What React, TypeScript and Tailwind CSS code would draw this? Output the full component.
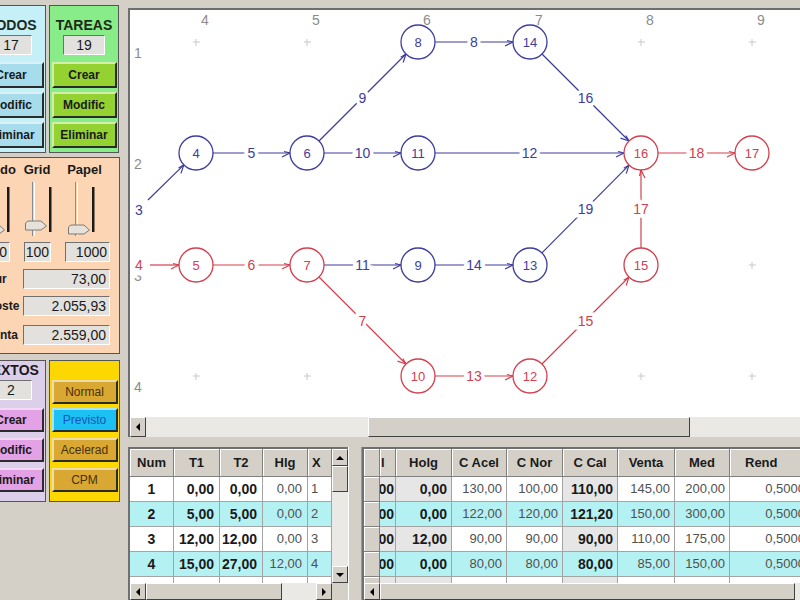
import React from 'react';

type Pt = [number, number];

const BLUE = '#3d3d9e';
const RED = '#d3404f';
const R = 17;

const nodes: Record<string, { p: Pt; c: string }> = {
  '4': { p: [196, 153], c: BLUE },
  '6': { p: [307, 153], c: BLUE },
  '8': { p: [418, 42], c: BLUE },
  '14': { p: [530, 42], c: BLUE },
  '11': { p: [418, 153], c: BLUE },
  '16': { p: [641, 153], c: RED },
  '17': { p: [752, 153], c: RED },
  '5': { p: [196, 265], c: RED },
  '7': { p: [307, 265], c: RED },
  '9': { p: [418, 265], c: BLUE },
  '13': { p: [530, 265], c: BLUE },
  '15': { p: [641, 265], c: RED },
  '10': { p: [418, 376], c: RED },
  '12': { p: [530, 376], c: RED },
};

interface EdgeDef {
  l: string;
  from: string | Pt;
  to: string;
  c: string;
  lp?: Pt;
}

const edges: EdgeDef[] = [
  { l: '3', from: [148, 200], to: '4', c: BLUE, lp: [139, 210] },
  { l: '4', from: [150, 265], to: '5', c: RED, lp: [139, 265] },
  { l: '5', from: '4', to: '6', c: BLUE },
  { l: '6', from: '5', to: '7', c: RED },
  { l: '9', from: '6', to: '8', c: BLUE },
  { l: '10', from: '6', to: '11', c: BLUE },
  { l: '8', from: '8', to: '14', c: BLUE },
  { l: '11', from: '7', to: '9', c: BLUE },
  { l: '7', from: '7', to: '10', c: RED },
  { l: '12', from: '11', to: '16', c: BLUE },
  { l: '16', from: '14', to: '16', c: BLUE },
  { l: '14', from: '9', to: '13', c: BLUE },
  { l: '19', from: '13', to: '16', c: BLUE },
  { l: '13', from: '10', to: '12', c: RED },
  { l: '15', from: '12', to: '15', c: RED },
  { l: '17', from: '15', to: '16', c: RED },
  { l: '18', from: '16', to: '17', c: RED },
];

function edgeGeom(e: EdgeDef) {
  const a = typeof e.from === 'string' ? nodes[e.from].p : e.from;
  const ra = typeof e.from === 'string' ? R : 0;
  const b = nodes[e.to].p;
  const dx = b[0] - a[0];
  const dy = b[1] - a[1];
  const len = Math.hypot(dx, dy);
  const ux = dx / len;
  const uy = dy / len;
  const nx = -uy;
  const ny = ux;
  const x1 = a[0] + ux * ra;
  const y1 = a[1] + uy * ra;
  const x2 = b[0] - ux * R;
  const y2 = b[1] - uy * R;
  const barb = `${x2 - ux * 8 + nx * 4},${y2 - uy * 8 + ny * 4} ${x2},${y2} ${x2 - ux * 6 - nx * 1.5},${y2 - uy * 6 - ny * 1.5}`;
  const lp: Pt = e.lp ?? [(a[0] + b[0]) / 2, (a[1] + b[1]) / 2];
  return { x1, y1, x2, y2, barb, lp };
}

function NetworkCanvas() {
  const cols = [196, 307, 418, 530, 641, 752];
  const rows = [42, 153, 265, 376];
  const crosses: Pt[] = [
    [196, 42], [307, 42], [641, 42], [752, 42], [752, 265],
    [196, 376], [307, 376], [641, 376], [752, 376],
  ];
  return (
    <div className="h-[407px] bg-white overflow-hidden">
      <svg width="670" height="407" viewBox="130 10 670 407" fontFamily="'Liberation Sans', Arial, sans-serif">
        {crosses.map(([x, y], i) => (
          <g key={i} stroke="#c8c8c8" strokeWidth="1">
            <line x1={x - 3} y1={y} x2={x + 4} y2={y} />
            <line x1={x} y1={y - 3} x2={x} y2={y + 4} />
          </g>
        ))}
        {cols.map((x, i) => (
          <text key={i} x={x + 9} y={20} fontSize="14" fill="#8c8c8c" textAnchor="middle" dominantBaseline="central">
            {i + 4}
          </text>
        ))}
        {rows.map((y, i) => (
          <text key={i} x={138} y={y + 11} fontSize="14" fill="#8c8c8c" textAnchor="middle" dominantBaseline="central">
            {i + 1}
          </text>
        ))}
        {edges.map((e) => {
          const g = edgeGeom(e);
          return (
            <g key={e.l} stroke={e.c} strokeWidth="1.2" fill="none">
              <line x1={g.x1} y1={g.y1} x2={g.x2} y2={g.y2} />
              <polyline points={g.barb} />
            </g>
          );
        })}
        {edges.map((e) => {
          const g = edgeGeom(e);
          return (
            <text
              key={e.l}
              x={g.lp[0]}
              y={g.lp[1]}
              fontSize="14"
              fill={e.c}
              stroke="#ffffff"
              strokeWidth={e.l === '4' ? 11 : 7}
              paintOrder="stroke"
              textAnchor="middle"
              dominantBaseline="central"
            >
              {e.l}
            </text>
          );
        })}
        {Object.entries(nodes).map(([k, n]) => (
          <g key={k}>
            <circle cx={n.p[0]} cy={n.p[1]} r={R} fill="#ffffff" stroke={n.c} strokeWidth="1.3" />
            <text x={n.p[0]} y={n.p[1]} fontSize="13" fill={n.c} textAnchor="middle" dominantBaseline="central">
              {k}
            </text>
          </g>
        ))}
      </svg>
    </div>
  );
}

const Arrow = ({ dir, className }: { dir: 'l' | 'r' | 'u' | 'd'; className: string }) => {
  const horiz = dir === 'l' || dir === 'r';
  const pts = { l: '4,0 0,4 4,8', r: '0,0 4,4 0,8', u: '0,4 4,0 8,4', d: '0,0 4,4 8,0' }[dir];
  return (
    <div className={`flex items-center justify-center shrink-0 bg-[#d4d0c8] border border-t-white border-l-white border-r-[#404040] border-b-[#404040] ${className}`}>
      <svg width={horiz ? 4 : 8} height={horiz ? 8 : 4} viewBox={horiz ? '0 0 4 8' : '0 0 8 4'}>
        <polygon points={pts} fill="#000" />
      </svg>
    </div>
  );
};

const thumb = 'bg-[#d4d0c8] border border-t-white border-l-white border-r-[#404040] border-b-[#404040]';
const track = 'bg-[#ebe9e5]';

function CanvasScrollbar() {
  return (
    <div className="h-[20px] flex bg-[#d4d0c8]">
      <Arrow dir="l" className="w-[16px] h-full" />
      <div className={`w-[222px] ${track}`} />
      <div className={`w-[322px] ${thumb}`} />
      <div className={`flex-1 ${track}`} />
    </div>
  );
}

function Btn({ children, className }: { children: React.ReactNode; className: string }) {
  return (
    <div className={`flex items-center justify-center shrink-0 border-2 border-t-white/60 border-l-white/60 border-r-[#2b2b2b] border-b-[#2b2b2b] ${className}`}>
      {children}
    </div>
  );
}

const sunken = 'border border-t-[#707070] border-l-[#707070] border-b-white border-r-white bg-[#e3e1dd]';

function RecordPanel({ title, value, panel, btn }: { title: string; value: string; panel: string; btn: string }) {
  return (
    <div className={`w-[70px] h-[148px] border border-[#555555] flex flex-col items-center pt-[9px] ${panel}`}>
      <div className="h-[20px] leading-[20px] text-[14px] font-bold text-[#1c2a1c]">{title}</div>
      <div className={`w-[42px] h-[20px] flex items-center justify-center text-[14px] ${sunken}`}>{value}</div>
      <div className="mt-[7px] flex flex-col gap-[4px] text-[12px] font-bold text-[#1a1a1a]">
        <Btn className={`w-[65px] h-[26px] ${btn}`}>Crear</Btn>
        <Btn className={`w-[65px] h-[26px] ${btn}`}>Modific</Btn>
        <Btn className={`w-[65px] h-[26px] ${btn}`}>Eliminar</Btn>
      </div>
    </div>
  );
}

function Slider({ t }: { t: number }) {
  return (
    <svg width="28" height="58" viewBox="0 0 28 58" className="shrink-0">
      <line x1="7.5" y1="2" x2="7.5" y2="56" stroke="#8a8a8a" />
      <line x1="9.5" y1="2" x2="9.5" y2="56" stroke="#ffffff" />
      <rect x="24" y="7" width="2.5" height="45" fill="#1a1a1a" />
      <polygon points={`0.5,${t + 2} 3,${t} 16,${t} 21.5,${t + 5} 16,${t + 9} 0.5,${t + 9}`} fill="#e6e2da" stroke="#7a7a7a" />
    </svg>
  );
}

function ValueRow({ label, value, className }: { label: string; value: string; className: string }) {
  return (
    <div className={`flex items-center h-[20px] ${className}`}>
      <div className="w-[47px] pl-[10px] text-[12px] font-bold whitespace-nowrap">{label}</div>
      <div className={`w-[87px] h-[20px] flex items-center justify-end pr-[3px] text-[14px] ${sunken}`}>{value}</div>
    </div>
  );
}

function ParamsPanel() {
  return (
    <div className="mt-[4px] w-[145px] h-[197px] border border-[#555555] bg-[#fcd6b4] flex flex-col pt-[4px]">
      <div className="h-[16px] flex text-[13px] font-bold leading-[16px]">
        <span className="w-[45px] text-center">Modo</span>
        <span className="w-[32px] text-center">Grid</span>
        <span className="w-[63px] text-center">Papel</span>
      </div>
      <div className="mt-[2px] h-[58px] flex">
        <div className="ml-[7px]"><Slider t={45} /></div>
        <div className="ml-[14px]"><Slider t={41} /></div>
        <div className="ml-[15px]"><Slider t={45} /></div>
      </div>
      <div className="mt-[4px] h-[20px] flex text-[14px]">
        <div className={`ml-[6px] w-[28px] flex items-center justify-end pr-[2px] ${sunken}`}>0</div>
        <div className={`ml-[14px] w-[27px] flex items-center justify-end pr-[1px] ${sunken}`}>100</div>
        <div className={`ml-[14px] w-[45px] flex items-center justify-end pr-[2px] ${sunken}`}>1000</div>
      </div>
      <ValueRow label="Dur" value="73,00" className="mt-[7px]" />
      <ValueRow label="Coste" value="2.055,93" className="mt-[7px]" />
      <ValueRow label="Venta" value="2.559,00" className="mt-[9px]" />
    </div>
  );
}

function TextPanel() {
  const btn = 'w-[65px] h-[24px] bg-[#e4a2e6]';
  return (
    <div className="w-[70px] h-[142px] border border-[#555555] bg-[#dccfea] flex flex-col items-center">
      <div className="h-[19px] leading-[19px] text-[14px] font-bold">TEXTOS</div>
      <div className={`w-[42px] h-[20px] flex items-center justify-center text-[14px] ${sunken}`}>2</div>
      <div className="mt-[8px] flex flex-col gap-[6px] text-[12px] font-bold">
        <Btn className={btn}>Crear</Btn>
        <Btn className={btn}>Modific</Btn>
        <Btn className={btn}>Eliminar</Btn>
      </div>
    </div>
  );
}

function ModePanel() {
  const btn = 'w-[66px] h-[24px]';
  return (
    <div className="w-[71px] h-[142px] border border-[#555555] bg-[#fcd800] flex flex-col items-center pt-[19px] text-[12px] text-[#4a3008]">
      <Btn className={`${btn} bg-[#d9a832]`}>Normal</Btn>
      <Btn className={`${btn} mt-[4px] bg-[#1cc0f2] text-[#1058b8]`}>Previsto</Btn>
      <Btn className={`${btn} mt-[6px] bg-[#d9a832]`}>Acelerad</Btn>
      <Btn className={`${btn} mt-[6px] bg-[#d9a832]`}>CPM</Btn>
    </div>
  );
}

function LeftColumn() {
  return (
    <div className="w-[120px] shrink-0 overflow-hidden">
      <div className="-ml-[25px] w-[145px] pt-[5px] flex flex-col">
        <div className="flex gap-[3px] pl-[1px]">
          <RecordPanel title="NODOS" value="17" panel="bg-[#c6f0f8]" btn="bg-[#a6dcec]" />
          <RecordPanel title="TAREAS" value="19" panel="bg-[#88ec88]" btn="bg-[#94d232]" />
        </div>
        <ParamsPanel />
        <div className="flex gap-[3px] pl-[1px] mt-[6px]">
          <TextPanel />
          <ModePanel />
        </div>
      </div>
    </div>
  );
}

interface Col {
  w: string;
  h: string;
  cls?: string;
  hcls?: string;
  gray?: boolean;
  fixed?: boolean;
}

const BOLD = 'font-bold text-[14px] text-[#1a1a1a]';
const NORM = 'text-[13px] text-[#505050]';
const CYAN = 'bg-[#b4f1f3]';

function GridTable({ cols, rows }: { cols: Col[]; rows: string[][] }) {
  return (
    <div className="flex flex-col">
      <div className="flex h-[28px] shrink-0">
        {cols.map((c, i) => (
          <div
            key={i}
            className={`${c.w} shrink-0 h-full flex items-center overflow-hidden whitespace-nowrap bg-[#d4d0c8] border-r border-b border-[#808080] shadow-[inset_1px_1px_0_#ffffff] text-[13px] font-bold text-[#1a1a1a] ${c.hcls ?? 'justify-center'}`}
          >
            {c.h}
          </div>
        ))}
      </div>
      {rows.map((r, ri) => (
        <div key={ri} className="flex h-[25px] shrink-0">
          {cols.map((c, ci) => {
            const bg = c.fixed
              ? 'bg-[#d4d0c8] shadow-[inset_1px_1px_0_#ffffff] border-[#808080]'
              : ri % 2 === 1
                ? `${CYAN} border-[#a4a4a4]`
                : c.gray
                  ? 'bg-[#e6e6e6] border-[#a4a4a4]'
                  : 'bg-white border-[#a4a4a4]';
            return (
              <div
                key={ci}
                className={`${c.w} shrink-0 h-full flex items-center overflow-hidden whitespace-nowrap border-r border-b ${bg} ${c.cls ?? ''}`}
              >
                {r[ci]}
              </div>
            );
          })}
        </div>
      ))}
    </div>
  );
}

const leftCols: Col[] = [
  { w: 'w-[44px]', h: 'Num', cls: `justify-center ${BOLD}` },
  { w: 'w-[46px]', h: 'T1', cls: `justify-end pr-[5px] ${BOLD}` },
  { w: 'w-[43px]', h: 'T2', cls: `justify-end pr-[5px] ${BOLD}` },
  { w: 'w-[45px]', h: 'Hlg', cls: `justify-end pr-[5px] ${NORM}` },
  { w: 'w-[24px]', h: 'X', cls: `justify-start pl-[3px] ${NORM}`, hcls: 'justify-start pl-[4px]' },
];

const leftRows = [
  ['1', '0,00', '0,00', '0,00', '1'],
  ['2', '5,00', '5,00', '0,00', '2'],
  ['3', '12,00', '12,00', '0,00', '3'],
  ['4', '15,00', '27,00', '12,00', '4'],
  ['5', '20,00', '30,00', '0,00', '5'],
];

const rightCols: Col[] = [
  { w: 'w-[16px]', h: '', fixed: true },
  { w: 'w-[16px]', h: 'l', cls: `justify-end pr-[1px] ${BOLD}`, hcls: 'justify-start pl-[1px]', gray: true },
  { w: 'w-[56px]', h: 'Holg', cls: `justify-end pr-[4px] ${BOLD}`, gray: true },
  { w: 'w-[55px]', h: 'C Acel', cls: `justify-end pr-[4px] ${NORM}` },
  { w: 'w-[56px]', h: 'C Nor', cls: `justify-end pr-[4px] ${NORM}` },
  { w: 'w-[55px]', h: 'C Cal', cls: `justify-end pr-[4px] ${BOLD}`, gray: true },
  { w: 'w-[57px]', h: 'Venta', cls: `justify-end pr-[4px] ${NORM}` },
  { w: 'w-[55px]', h: 'Med', cls: `justify-end pr-[4px] ${NORM}` },
  { w: 'w-[80px]', h: 'Rend', cls: `justify-end pr-[4px] ${NORM}`, hcls: 'justify-start pl-[15px]' },
];

const rightRows = [
  ['', '0,00', '0,00', '130,00', '100,00', '110,00', '145,00', '200,00', '0,5000'],
  ['', '0,00', '0,00', '122,00', '120,00', '121,20', '150,00', '300,00', '0,5000'],
  ['', '0,00', '12,00', '90,00', '90,00', '90,00', '110,00', '175,00', '0,5000'],
  ['', '0,00', '0,00', '80,00', '80,00', '80,00', '85,00', '150,00', '0,5000'],
  ['', '0,00', '15,00', '180,00', '180,00', '185,00', '140,00', '275,00', '0,5000'],
];

function LeftGrid() {
  return (
    <div className="w-[220px] shrink-0 flex flex-col border-l-2 border-t-2 border-l-[#707070] border-t-[#707070]">
      <div className="flex h-[134px]">
        <div className="w-[202px] overflow-hidden">
          <GridTable cols={leftCols} rows={leftRows} />
        </div>
        <div className="w-[16px] flex flex-col">
          <Arrow dir="u" className="h-[17px] w-full" />
          <div className={`h-[26px] ${thumb}`} />
          <div className={`flex-1 ${track}`} />
          <Arrow dir="d" className="h-[17px] w-full" />
        </div>
      </div>
      <div className="flex h-[17px]">
        <Arrow dir="l" className="w-[16px] h-full" />
        <div className={`w-[136px] ${thumb}`} />
        <div className={`flex-1 ${track}`} />
        <Arrow dir="r" className="w-[16px] h-full" />
        <div className="w-[16px] bg-[#d4d0c8]" />
      </div>
    </div>
  );
}

function RightGrid() {
  return (
    <div className="flex-1 min-w-0 flex flex-col border-l-2 border-t-2 border-l-[#707070] border-t-[#707070] overflow-hidden">
      <div className="h-[134px] overflow-hidden">
        <GridTable cols={rightCols} rows={rightRows} />
      </div>
      <div className="flex h-[17px]">
        <Arrow dir="l" className="w-[16px] h-full" />
        <div className={`w-[415px] shrink-0 ${thumb}`} />
        <div className={`flex-1 ${track}`} />
      </div>
    </div>
  );
}

export default function App() {
  return (
    <div className="w-[800px] h-[600px] overflow-hidden bg-[#d4d0c8] flex font-['Liberation_Sans',Arial,sans-serif] text-[#1a1a1a]">
      <LeftColumn />
      <div className="ml-[8px] flex-1 min-w-0 flex flex-col pt-[8px]">
        <div className="border-l-2 border-t-2 border-[#6e6e6e] flex flex-col">
          <NetworkCanvas />
          <CanvasScrollbar />
        </div>
        <div className="h-[10px] shrink-0" />
        <div className="flex flex-1 min-h-0">
          <LeftGrid />
          <div className="w-[14px] shrink-0 border-l border-l-white border-r border-r-[#9a9a9a]" />
          <RightGrid />
        </div>
      </div>
    </div>
  );
}
